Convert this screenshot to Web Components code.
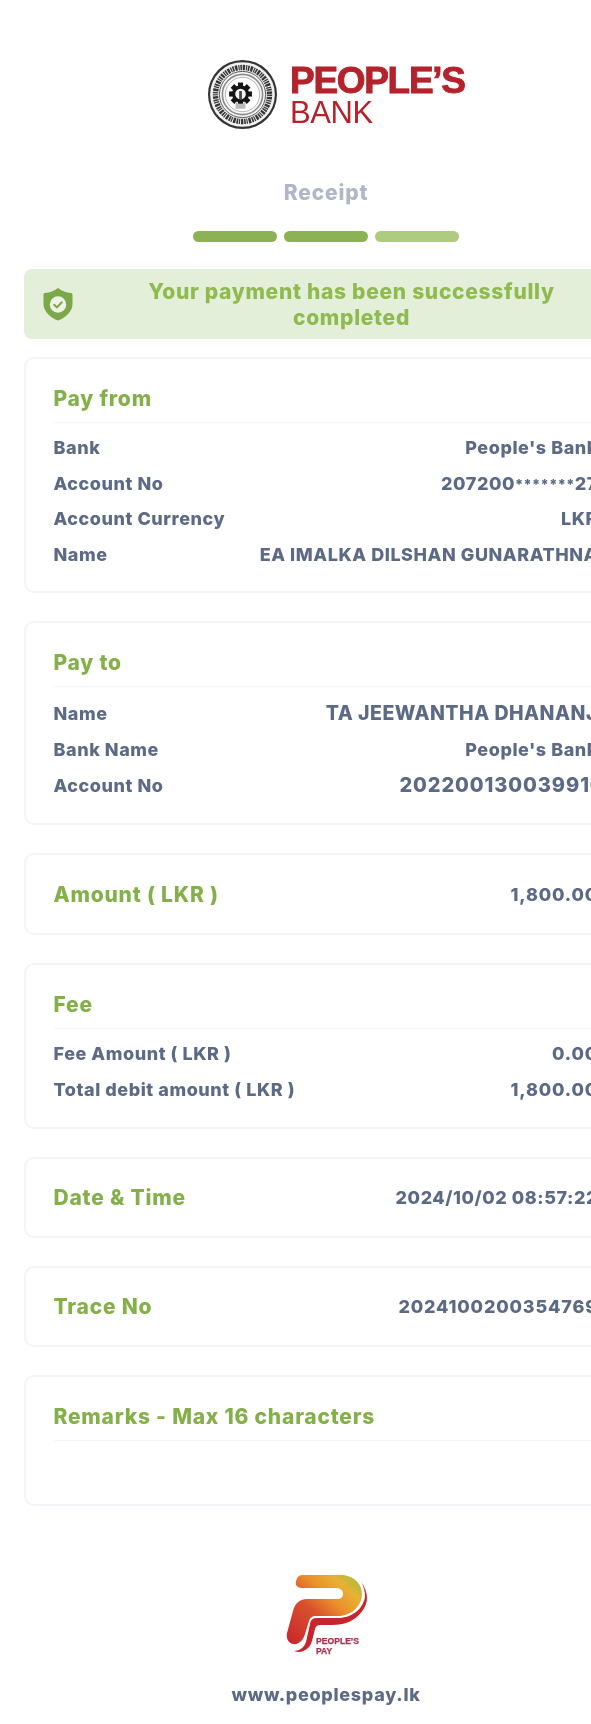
<!DOCTYPE html>
<html>
<head>
<meta charset="utf-8">
<title>Receipt</title>
<style>
  html, body { margin: 0; padding: 0; background: #fff; overflow: hidden; }
  body { font-family: Inter, "Liberation Sans", sans-serif; }
  .wide { font-size: 19.5px; letter-spacing: .5px; }
  .acct { font-size: 20px; letter-spacing: .9px; margin-right: -6px; display: inline-block; }
  .num { letter-spacing: .85px; }
  .stars { font-size: 14px; letter-spacing: .4px; }
  .date { letter-spacing: .55px; }
</style>
</head>
<body>
<receipt-page>
  <bank-header></bank-header>
  <step-bar title-text="Receipt"></step-bar>
  <success-alert>Your payment has been successfully completed</success-alert>

  <info-card heading="Pay from" style="--card-bottom:18.6px;--row-h:35.6px">
    <info-row label="Bank">People's Bank</info-row>
    <info-row label="Account No">207200<span class="stars">*******</span>27</info-row>
    <info-row label="Account Currency">LKR</info-row>
    <info-row label="Name">EA IMALKA DILSHAN GUNARATHNA</info-row>
  </info-card>

  <info-card heading="Pay to" style="--card-top:8.5px;--card-bottom:19.5px;--row-h:36px">
    <info-row label="Name"><span class="wide">TA JEEWANTHA DHANANJ</span></info-row>
    <info-row label="Bank Name">People's Bank</info-row>
    <info-row label="Account No"><span class="acct">202200130039916</span></info-row>
  </info-card>

  <summary-card label="Amount ( LKR )" style="--sum-h:82px"><span class="num">1,800.00</span></summary-card>

  <info-card heading="Fee">
    <info-row label="Fee Amount ( LKR )"><span class="num">0.00</span></info-row>
    <info-row label="Total debit amount ( LKR )"><span class="num">1,800.00</span></info-row>
  </info-card>

  <summary-card label="Date &amp; Time"><span class="date">2024/10/02 08:57:22</span></summary-card>
  <summary-card label="Trace No"><span class="num">2024100200354769</span></summary-card>

  <info-card heading="Remarks - Max 16 characters" style="--card-body:36px"></info-card>

  <pay-footer></pay-footer>
</receipt-page>

<script>
class ReceiptPage extends HTMLElement {
  connectedCallback() {
    this.attachShadow({ mode: 'open' });
    this.shadowRoot.innerHTML = `
      <style>
        :host { display: block; width: 652px; padding: 0 24px; box-sizing: border-box; filter: blur(.45px); }
        .stack { display: flex; flex-direction: column; }
      </style>
      <div class="stack"><slot></slot></div>
    `;
  }
}

class BankHeader extends HTMLElement {
  connectedCallback() {
    this.attachShadow({ mode: 'open' });
    // gear for the middle of the seal
    const teeth = Array.from({ length: 8 }, (_, i) =>
      `<rect x="-2.6" y="-11.6" width="5.2" height="5" fill="#151515" transform="rotate(${i * 45})"/>`).join('');
    this.shadowRoot.innerHTML = `
      <style>
        :host { display: flex; padding: 59px 0 0 183px; height: 118px; }
        .seal { width: 71px; height: 71px; flex: none; filter: blur(.4px); }
        .word { margin: 5px 0 0 12px; color: #b4222b; font-family: "Liberation Sans", sans-serif; }
        .big { font-size: 37px; line-height: 34px; font-weight: 700; letter-spacing: -1.3px; -webkit-text-stroke: .9px #b4222b; }
        .small { font-size: 31px; line-height: 30px; letter-spacing: -.4px; }
      </style>
      <svg class="seal" viewBox="-36 -36 72 72" aria-hidden="true">
        <circle r="35" fill="#333"/>
        <circle r="32.8" fill="#f1f1f1"/>
        <circle r="27.4" fill="none" stroke="#333" stroke-width="5.4" stroke-dasharray="1.6 .9 2.4 1 1.2 .8"/>
        <circle r="23.4" fill="#f7f7f7" stroke="#555" stroke-width="1"/>
        <circle r="20.4" fill="none" stroke="#8a8a8a" stroke-width="1.6"/>
        <circle r="17.4" fill="#fff" stroke="#999" stroke-width=".7"/>
        <g transform="translate(-2 -.5)">
          ${teeth}
          <circle r="8.6" fill="#151515"/>
          <circle r="5.4" fill="#f4f4f4"/>
          <path d="M-1.4 -3h2.8v8h-2.8z" fill="#444"/>
          <path d="M-5 8 q5 4 10 0 l0 7 h-10z" fill="#bbb"/>
        </g>
      </svg>
      <div class="word">
        <div class="big">PEOPLE’S</div>
        <div class="small">BANK</div>
      </div>
    `;
  }
}

class StepBar extends HTMLElement {
  connectedCallback() {
    this.attachShadow({ mode: 'open' });
    this.shadowRoot.innerHTML = `
      <style>
        :host { display: flex; flex-direction: column; align-items: center; }
        .title { margin-top: 3px; font-size: 21px; line-height: 26px; font-weight: 800; letter-spacing: .85px; color: #b0b7c9; }
        .bars { display: flex; gap: 7px; margin: 25px 0 27px; }
        .bars i { display: block; width: 84px; height: 11px; border-radius: 6px; background: #8db255; }
        .bars i:last-child { background: #aecb80; }
      </style>
      <div class="title">${this.getAttribute('title-text')}</div>
      <div class="bars"><i></i><i></i><i></i></div>
    `;
  }
}

class SuccessAlert extends HTMLElement {
  connectedCallback() {
    this.attachShadow({ mode: 'open' });
    this.shadowRoot.innerHTML = `
      <style>
        :host { display: flex; align-items: center; height: 70px; border-radius: 8px; background: #e4efd9; margin-bottom: 18px; }
        svg { width: 30px; height: 34px; flex: none; margin-left: 19px; }
        .text { flex: 1; margin-left: 2px; text-align: center; padding: 2px 60px 0; font-size: 21px; line-height: 26px; font-weight: 800; letter-spacing: .7px; color: #8fba50; }
      </style>
      <svg viewBox="0 0 30 34" aria-hidden="true">
        <path d="M15 1 C19 4 23 5.5 28 6 C29.5 6.2 29.5 7 29.5 8 V17 C29.5 25 22 31 15 33.5 C8 31 .5 25 .5 17 V8 C.5 7 .5 6.2 2 6 C7 5.5 11 4 15 1 Z" fill="#7ba849"/>
        <circle cx="15" cy="17.5" r="8.2" fill="#eef3e6"/>
        <path d="M11.2 17.8 L14 20.4 L18.8 15.2" fill="none" stroke="#7ba849" stroke-width="2" stroke-linecap="round" stroke-linejoin="round"/>
      </svg>
      <div class="text"><slot></slot></div>
    `;
  }
}

class InfoCard extends HTMLElement {
  connectedCallback() {
    this.attachShadow({ mode: 'open' });
    this.shadowRoot.innerHTML = `
      <style>
        :host { display: block; border: 2px solid #f3f5f9; border-radius: 10px; padding: 0 28px 0 27.5px; margin-bottom: 28px; }
        h2 { margin: 0; height: 64px; padding-top: 27px; box-sizing: border-box; font-size: 21px; line-height: 26px; font-weight: 800; letter-spacing: .78px; color: #84b04a; border-bottom: 1px solid #f6f7fa; }
        .rows { display: flex; flex-direction: column; min-height: var(--card-body, 0); padding: var(--card-top, 7px) 0 var(--card-bottom, 20px); }
      </style>
      <h2>${this.getAttribute('heading')}</h2>
      <div class="rows"><slot></slot></div>
    `;
  }
}

class InfoRow extends HTMLElement {
  connectedCallback() {
    this.attachShadow({ mode: 'open' });
    this.shadowRoot.innerHTML = `
      <style>
        :host { display: flex; justify-content: space-between; align-items: center; height: var(--row-h, 35.5px); font-size: 18px; font-weight: 800; letter-spacing: .55px; color: #5d6a86; white-space: nowrap; }
      </style>
      <span>${this.getAttribute('label')}</span>
      <span><slot></slot></span>
    `;
  }
}

class SummaryCard extends HTMLElement {
  connectedCallback() {
    this.attachShadow({ mode: 'open' });
    this.shadowRoot.innerHTML = `
      <style>
        :host { display: flex; justify-content: space-between; align-items: center; height: var(--sum-h, 81px); border: 2px solid #f3f5f9; border-radius: 10px; padding: 1px 28px 0 27.5px; margin-bottom: 28px; box-sizing: border-box; white-space: nowrap; }
        .label { font-size: 21px; font-weight: 800; letter-spacing: .78px; color: #84b04a; }
        .value { font-size: 18px; font-weight: 800; letter-spacing: .45px; color: #5d6a86; }
      </style>
      <span class="label">${this.getAttribute('label')}</span>
      <span class="value"><slot></slot></span>
    `;
  }
}

class PayFooter extends HTMLElement {
  connectedCallback() {
    this.attachShadow({ mode: 'open' });
    this.shadowRoot.innerHTML = `
      <style>
        :host { display: flex; flex-direction: column; align-items: center; margin-top: 35px; }
        svg { width: 92px; height: 92px; filter: blur(.4px); }
        text { font-family: "Liberation Sans", sans-serif; font-weight: 700; fill: #a8304c; stroke: #a8304c; stroke-width: .25px; }
        .url { margin-top: 22px; font-size: 18px; line-height: 24px; font-weight: 800; color: #5d6a86; letter-spacing: .7px; }
      </style>
      <svg viewBox="0 0 92 92" aria-hidden="true">
        <defs>
          <linearGradient id="g" x1="0" y1="1" x2="1" y2="0">
            <stop offset="0" stop-color="#c8242d"/>
            <stop offset=".42" stop-color="#d9522c"/>
            <stop offset=".62" stop-color="#eb8f2c"/>
            <stop offset=".8" stop-color="#e8b133"/>
            <stop offset="1" stop-color="#93bf44"/>
          </linearGradient>
        </defs>
        <path d="M22 6 H60 C73 6 82 14 82 25 C82 37 71 47 58 47 H36 C32 47 30 49 29 52 L25 65 C23 72 18 76 13 75 C8 74 6 69 7 64 L13 42 C15 34 20 30 27 30 H57 C61 30 63 28 63 25 C63 21 60 19 56 19 H22 C17 19 15 16 16 12 C17 8 19 6 22 6 Z" fill="url(#g)"/>
        <path d="M81 13 C88 22 89 32 83 41 C76 52 64 56 52 56 H40 C37 56 36 57 35 60 L32 72 C30 80 22 85 14 82 C19 82 24 79 26 73 L30 55 C31 50 33 49 38 49 H58 C72 49 83 40 85 28 C85 22 84 18 81 13 Z" fill="#c8242d"/>
        <text x="36" y="75" font-size="8.6">PEOPLE’S</text>
        <text x="36" y="85" font-size="8.6">PAY</text>
      </svg>
      <div class="url">www.peoplespay.lk</div>
    `;
  }
}

customElements.define('receipt-page', ReceiptPage);
customElements.define('bank-header', BankHeader);
customElements.define('step-bar', StepBar);
customElements.define('success-alert', SuccessAlert);
customElements.define('info-card', InfoCard);
customElements.define('info-row', InfoRow);
customElements.define('summary-card', SummaryCard);
customElements.define('pay-footer', PayFooter);
</script>
</body>
</html>
